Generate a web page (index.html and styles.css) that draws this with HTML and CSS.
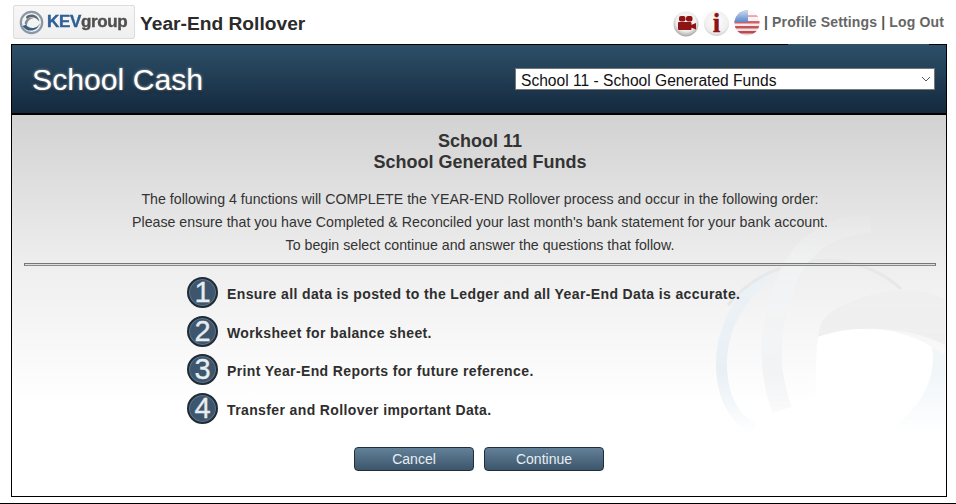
FILE: index.html
```html
<!DOCTYPE html>
<html lang="en">
<head>
<meta charset="utf-8">
<title>Year-End Rollover</title>
<link rel="stylesheet" href="styles.css">
</head>
<body>
<header class="topbar">
  <div class="logo">
    <svg class="logo-mark" viewBox="0 0 24 24" width="27" height="27" aria-hidden="true">
      <circle cx="12" cy="12" r="9.5" fill="none" stroke="#8a98a6" stroke-width="2"/>
      <path d="M4 15C8 21 17 21 20 12C18 17 11 19 7 14Z" fill="#3a5d82"/>
      <path d="M7 7C11 3 18 5 19 11C16 7 11 6 8 9Z" fill="#5a6874"/>
      <path d="M6 13C6 9 10 7 14 8C10 9 8 11 8 15Z" fill="#7d8a96"/>
    </svg>
    <span class="logo-text"><span class="logo-kev">KEV</span><span class="logo-group">group</span></span>
  </div>
  <h1 class="page-title">Year-End Rollover</h1>
  <nav class="tools">
    <svg class="ball" viewBox="0 0 26 26" aria-hidden="true">
      <defs>
        <radialGradient id="ballFill" cx="50%" cy="40%" r="60%">
          <stop offset="0" stop-color="#ffffff"/><stop offset=".65" stop-color="#f0eeee"/><stop offset="1" stop-color="#a9a3a3"/>
        </radialGradient>
      </defs>
      <circle cx="13" cy="13" r="12.5" fill="url(#ballFill)"/>
      <rect x="6" y="5" width="6.500" height="5.500" rx="2" fill="#8e1414"/>
      <rect x="13" y="5" width="6.500" height="5.500" rx="2" fill="#8e1414"/>
      <rect x="5" y="11" width="13.500" height="8" rx="1" fill="#8e1414"/>
      <path d="M18 14L23 12V18.500L18 16.500Z" fill="#8e1414"/>
    </svg>
    <span class="ball-info"><span class="ball-i">i</span></span>
    <svg class="ball flag" viewBox="0 0 26 26" aria-hidden="true">
      <defs>
        <clipPath id="flagClip"><circle cx="13" cy="13" r="12.500"/></clipPath>
        <linearGradient id="flagGloss" x1="0" y1="0" x2="0" y2="1">
          <stop offset="0" stop-color="#fff" stop-opacity=".75"/><stop offset=".5" stop-color="#fff" stop-opacity=".1"/><stop offset="1" stop-color="#000" stop-opacity=".08"/>
        </linearGradient>
      </defs>
      <g clip-path="url(#flagClip)">
        <rect width="26" height="26" fill="#f6eeee"/>
        <rect y="11" width="26" height="2.500" fill="#c9484e"/>
        <rect y="16" width="26" height="2.500" fill="#c9484e"/>
        <rect y="21" width="26" height="2.500" fill="#c9484e"/>
        <rect y="5" x="14" width="12" height="2" fill="#d76a6e"/>
        <rect width="14" height="12" fill="#3f74c4"/>
        <rect width="26" height="26" fill="url(#flagGloss)"/>
      </g>
    </svg>
    <span class="links">| <a href="#">Profile Settings</a> | <a href="#">Log Out</a></span>
  </nav>
</header>

<main class="card">
  <span class="top-notch"></span>
  <section class="banner">
    <div class="brand">School Cash</div>
    <div class="select-wrap">
      <select class="school-select" aria-label="School">
        <option>School 11 - School Generated Funds</option>
      </select>
      <svg class="chevron" viewBox="0 0 10 6" width="10" height="6" aria-hidden="true"><path d="M1 1L5 5L9 1" fill="none" stroke="#555" stroke-width="1"/></svg>
    </div>
  </section>
  <section class="content">
    <svg class="watermark" viewBox="0 0 240 220" width="240" height="220" aria-hidden="true">
      <defs>
        <linearGradient id="wmFade" x1="0" y1="0" x2="0" y2="1">
          <stop offset="0" stop-color="#fff" stop-opacity=".1"/><stop offset=".3" stop-color="#fff" stop-opacity=".8"/><stop offset=".72" stop-color="#fff"/><stop offset="1" stop-color="#fff" stop-opacity="0"/>
        </linearGradient>
        <mask id="wmMask"><rect width="240" height="220" fill="url(#wmFade)"/></mask>
      </defs>
      <g mask="url(#wmMask)" fill="none" class="wm-shapes">
        <path d="M62 60C30 85 12 120 16 160C18 185 30 205 48 214" stroke="#e9f0f5" stroke-width="11"/>
        <path d="M22 90C50 55 95 42 135 46C160 50 180 60 195 74" stroke="#e2e5e7" stroke-width="3"/>
        <path d="M76 195C60 150 62 110 85 55C105 20 135 10 165 8" stroke="#f2f3f4" stroke-width="20"/>
        <path d="M112 122C115 100 125 95 150 85C180 73 215 72 239 84V130C200 110 150 110 112 122Z" fill="#eeeeef"/>
        <path d="M112 122C150 108 195 112 226 132C232 170 205 205 175 215H105C112 190 108 150 112 122Z" fill="#ffffff"/>
        <path d="M226 132C232 165 212 195 185 214H239V140Z" fill="#f1f6f9"/>
      </g>
    </svg>
    <div class="heading">
      <h2>School 11</h2>
      <h2>School Generated Funds</h2>
    </div>
    <div class="intro">
      <p>The following 4 functions will COMPLETE the YEAR-END Rollover process and occur in the following order:</p>
      <p>Please ensure that you have Completed &amp; Reconciled your last month's bank statement for your bank account.</p>
      <p>To begin select continue and answer the questions that follow.</p>
    </div>
    <hr class="rule">
    <ol class="steps">
      <li class="step"><span class="num">1</span><span class="step-text">Ensure all data is posted to the Ledger and all Year-End Data is accurate.</span></li>
      <li class="step"><span class="num">2</span><span class="step-text">Worksheet for balance sheet.</span></li>
      <li class="step"><span class="num">3</span><span class="step-text">Print Year-End Reports for future reference.</span></li>
      <li class="step"><span class="num">4</span><span class="step-text">Transfer and Rollover important Data.</span></li>
    </ol>
    <div class="actions">
      <button class="btn" type="button">Cancel</button>
      <button class="btn" type="button">Continue</button>
    </div>
  </section>
</main>
<div class="foot-line"></div>
</body>
</html>
```
FILE: styles.css
```css
* { box-sizing: border-box; }
html, body { margin: 0; padding: 0; height: 504px; overflow: hidden; background: #fff; }
body { font-family: "Liberation Sans", Arial, sans-serif; color: #333; }

.topbar { height: 44px; display: flex; align-items: flex-start; padding: 5px 12px 0 13px; }
.logo {
  width: 122px; height: 34px; display: flex; align-items: center; gap: 2px; padding-left: 4px;
  background: linear-gradient(#f7f7f7, #efefef); border: 1px solid #dcdcdc; border-radius: 2px;
}
.logo-mark { filter: blur(.3px); flex: none; }
.logo-text { font-size: 17px; font-weight: 700; letter-spacing: -.35px; -webkit-text-stroke: .4px; filter: blur(.3px); }
.logo-kev { color: #2f5f96; }
.logo-group { color: #4f4f4f; }
.page-title { margin: 7px 0 0 5px; font-size: 19.200px; line-height: 24px; font-weight: 700; color: #2b2b2b; }

.tools { margin-left: auto; display: flex; align-items: flex-start; padding-top: 6px; }
.ball { width: 26px; height: 26px; display: block; flex: none; margin-right: 5px; }
.ball-info {
  width: 25px; height: 25px; border-radius: 50%; margin-right: 5px; flex: none;
  display: flex; align-items: center; justify-content: center;
  background: radial-gradient(circle at 50% 40%, #fff 0, #f0eeee 60%, #a9a3a3 100%);
}
.ball-i { font-family: "Liberation Serif", serif; font-weight: 700; font-size: 27px; line-height: 25px; color: #8e1414; -webkit-text-stroke: .4px #8e1414; }
.flag { margin-top: -1px; margin-right: 4px; }
.links { margin-top: 2px; font-size: 14px; font-weight: 700; line-height: 18px; letter-spacing: .15px; color: #555; white-space: pre; }
.links a { color: #666; text-decoration: none; }

.card { position: relative; margin: 0 9px 0 11px; height: 453px; border: 1px solid #000; display: flex; flex-direction: column; }
.top-notch { position: absolute; top: -1px; right: 17px; width: 141px; height: 1px; background: #2d5069; }
.banner {
  height: 70px; flex: none; display: flex; align-items: center; justify-content: space-between;
  padding: 0 11px 3px 20px; background: linear-gradient(#2d5069, #14293d); border-bottom: 2px solid #000;
}
.brand { margin-top: 4px; font-size: 30.200px; line-height: 34px; color: #fff; text-shadow: 0 0 3px rgba(255,255,255,.6), 0 2px 3px rgba(0,0,0,.5); }
.select-wrap { position: relative; width: 420px; height: 22px; margin-bottom: -3px; }
.school-select {
  appearance: none; display: block; width: 100%; height: 100%; padding: 2px 0 0 5px; font-family: "Liberation Sans", Arial, sans-serif;
  font-size: 15.600px; color: #111; background: #fff; border: 1px solid #767676; border-radius: 0;
}
.chevron { position: absolute; right: 4px; top: 8px; pointer-events: none; }

.content {
  position: relative; flex: 1; display: flex; flex-direction: column; padding: 16px 10px 0 12px; overflow: hidden;
  background: linear-gradient(#d2d2d2 0, #efefef 155px, #fff 290px);
}
.content > *:not(.watermark) { position: relative; }
.watermark { position: absolute; right: 0; bottom: 61px; }
.heading { text-align: center; }
.heading h2 { margin: 0; font-size: 18px; line-height: 20.500px; font-weight: 700; color: #333; }
.intro { margin-top: 16px; text-align: center; font-size: 14.200px; line-height: 23px; color: #333; }
.intro p { margin: 0; }
.rule { width: 100%; height: 3px; margin: 6px 0 0; border: 1px solid #777; background: #ddd; border-bottom-color: #888; }

.steps { list-style: none; margin: 11px 0 0; padding: 0 0 0 163px; display: flex; flex-direction: column; gap: 7.500px; }
.step { display: flex; align-items: center; gap: 9px; height: 31px; }
.num {
  width: 31px; height: 31px; flex: none; border-radius: 50%; display: flex; align-items: center; justify-content: center;
  background: #3e566d; border: 2px solid #1f2b36; box-shadow: inset 0 0 0 1px #5f7589; color: #e8edf1; font-size: 29px; line-height: 27px; -webkit-text-stroke: .3px #e8edf1;
}
.step-text { padding-top: 3px; font-size: 14px; font-weight: 700; letter-spacing: .38px; color: #2e2e2e; }

.actions { margin-top: 23px; display: flex; justify-content: center; gap: 10px; padding-right: 2px; }
.btn {
  width: 120px; height: 24px; padding: 0; font-family: "Liberation Sans", Arial, sans-serif; font-size: 14px; color: #e9eef2;
  background: linear-gradient(#628199, #3c556b); border: 1px solid #1f2e3c; border-radius: 4px;
}
.foot-line { height: 1px; margin-top: 6px; background: #000; }
```
